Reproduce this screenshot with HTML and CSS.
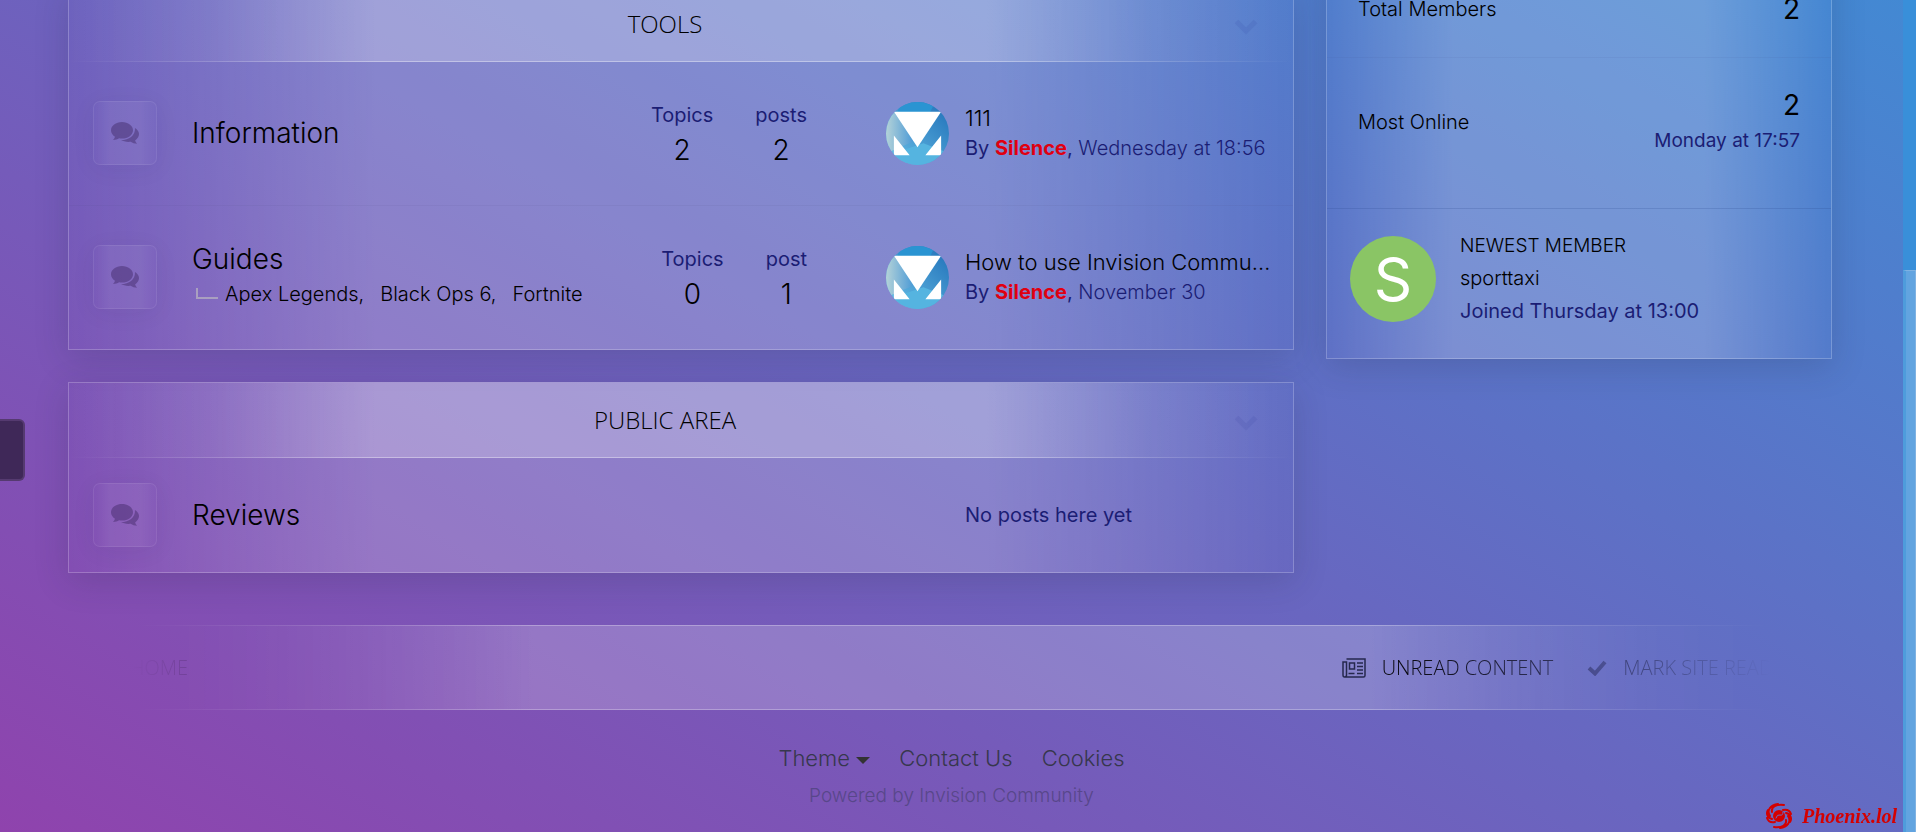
FILE: index.html
```html
<!DOCTYPE html>
<html lang="en">

<head>
    <meta charset="UTF-8">
    <meta name="viewport" content="width=device-width, initial-scale=1.0">
    <title>Forums</title>
    <link rel="stylesheet" href="styles.css">
</head>

<body>

    <!-- shared icons -->
    <svg class="sprite" aria-hidden="true">
        <symbol id="comments" viewBox="0 0 28 22">
            <path d="M11 0c6.100 0 11 3.700 11 8.300s-4.900 8.300-11 8.300c-1 0-2-.1-2.900-.3-1.700 1.200-3.700 1.700-6.100 1.700 1-1 1.700-2 2-3.300C1.500 13.200 0 10.900 0 8.300 0 3.700 4.900 0 11 0z" />
            <path d="M24 6c2.400 1.500 4 3.700 4 6.100 0 2.500-1.500 4.800-3.900 6.300.3 1.200 1 2.200 2 3.300-2.600 0-4.700-.7-6.300-1.900-4 .5-7.300-.4-9.800-1.700C17.500 18.200 24.500 14 24 6z" />
        </symbol>
        <symbol id="chevron" viewBox="0 0 26 20">
            <path d="M3.500 4.500 13 14l9.500-9.500" fill="none" stroke="currentColor" stroke-width="5" />
        </symbol>
        <symbol id="avatar" viewBox="0 0 64 64">
            <linearGradient id="sky" x1="0" y1="1" x2="1" y2="0">
                <stop offset="0" stop-color="#6cc3e8" />
                <stop offset="1" stop-color="#1f6fb8" />
            </linearGradient>
            <linearGradient id="haze" x1="0" y1="0" x2="1" y2="0">
                <stop offset="0" stop-color="#b4d2d8" />
                <stop offset="1" stop-color="#4b9ad6" />
            </linearGradient>
            <rect width="64" height="64" fill="url(#sky)" />
            <path d="M0 0h14L8 10l20 30-28 12z" fill="url(#haze)" />
            <path d="M14 0h36L44 12 12 10z" fill="#2a94d2" />
            <path d="M0 54l20-6 18-6 26 10v12H0z" fill="#55b4e0" />
            <path d="M8 10h48L32 46z" fill="#fff" />
            <path d="M8 34l16 20H8zM56 34v20H40z" fill="#fff" />
        </symbol>
    </svg>

    <div class="layout">
        <main class="forums">
            <section class="panel">
                <header class="panel-header">
                    <h2>TOOLS</h2>
                    <button type="button" class="toggle" aria-label="Toggle Tools"><svg><use href="#chevron" /></svg></button>
                </header>
                <div class="forum">
                    <span class="forum-icon"><svg><use href="#comments" /></svg></span>
                    <div class="forum-main">
                        <h3><a href="#">Information</a></h3>
                    </div>
                    <dl class="stats">
                        <div><dt>Topics</dt><dd>2</dd></div>
                        <div><dt>posts</dt><dd>2</dd></div>
                    </dl>
                    <div class="last-post">
                        <svg class="avatar"><use href="#avatar" /></svg>
                        <div class="last-text">
                            <a href="#" class="topic">111</a>
                            <p>By <a href="#" class="author">Silence</a>, <a href="#" class="date">Wednesday at 18:56</a></p>
                        </div>
                    </div>
                </div>
                <div class="forum">
                    <span class="forum-icon"><svg><use href="#comments" /></svg></span>
                    <div class="forum-main">
                        <h3><a href="#">Guides</a></h3>
                        <ul class="subforums">
                            <li><a href="#">Apex Legends</a>,</li>
                            <li><a href="#">Black Ops 6</a>,</li>
                            <li><a href="#">Fortnite</a></li>
                        </ul>
                    </div>
                    <dl class="stats">
                        <div><dt>Topics</dt><dd>0</dd></div>
                        <div><dt>post</dt><dd>1</dd></div>
                    </dl>
                    <div class="last-post">
                        <svg class="avatar"><use href="#avatar" /></svg>
                        <div class="last-text">
                            <a href="#" class="topic">How to use Invision Community</a>
                            <p>By <a href="#" class="author">Silence</a>, <a href="#" class="date">November 30</a></p>
                        </div>
                    </div>
                </div>
            </section>

            <section class="panel compact">
                <header class="panel-header">
                    <h2>PUBLIC AREA</h2>
                    <button type="button" class="toggle" aria-label="Toggle Public Area"><svg><use href="#chevron" /></svg></button>
                </header>
                <div class="forum">
                    <span class="forum-icon"><svg><use href="#comments" /></svg></span>
                    <div class="forum-main">
                        <h3><a href="#">Reviews</a></h3>
                    </div>
                    <div class="last-post">
                        <p class="empty">No posts here yet</p>
                    </div>
                </div>
            </section>
        </main>

        <aside class="panel sidebar">
            <ul class="member-stats">
                <li><span>Total Members</span><strong>2</strong></li>
                <li><span>Most Online</span><div><strong>2</strong><small>Monday at 17:57</small></div></li>
            </ul>
            <div class="newest">
                <span class="letter">S</span>
                <div>
                    <h4>NEWEST MEMBER</h4>
                    <a href="#">sporttaxi</a>
                    <p>Joined Thursday at 13:00</p>
                </div>
            </div>
        </aside>
    </div>

    <nav class="bottom-bar">
        <a href="#" class="home">HOME</a>
        <a href="#">
            <svg width="24" height="20" viewBox="0 0 24 20" fill="none" stroke="currentColor" stroke-width="1.500">
                <path d="M4.500 1h18.500v16.500q0 1.500-1.500 1.500H2.500q-1.500 0-1.500-2V4h3.500v13q0 2-2 2" />
                <path d="M7.500 5h5v6h-5zM15 5h6M15 8.500h6M15 12h6M6.500 15.500h6M15 15.500h6" />
            </svg>
            UNREAD CONTENT
        </a>
        <a href="#">
            <svg width="20" height="16" viewBox="0 0 20 16" fill="none" stroke="currentColor" stroke-width="4">
                <path d="M2 8l6 5.500L18 2" />
            </svg>
            MARK SITE READ
        </a>
    </nav>

    <footer>
        <ul class="footer-links">
            <li><button type="button">Theme <i class="caret"></i></button></li>
            <li><a href="#">Contact Us</a></li>
            <li><a href="#">Cookies</a></li>
        </ul>
        <p class="powered"><a href="#">Powered by Invision Community</a></p>
    </footer>

    <button type="button" class="side-tab" aria-label="Open panel"></button>

    <a href="#" class="brand">
        <svg width="26" height="26" viewBox="0 0 26 26" fill="none" stroke="currentColor" stroke-width="2" stroke-linecap="round">
            <circle cx="13" cy="13" r="5" fill="currentColor" />
            <path d="M6 9C5 4 10 1 18 2M4 13C0 7 5 2 12 1M6 16C1 15 0 10 2 7M9 19C4 20 2 18 1 15" />
            <path d="M20 17c1 5-4 8-12 7M22 13c4 6-1 11-8 12M20 10c5 1 6 6 4 9M17 7c5-1 7 1 8 4" />
            <path d="M10 15q1-4 4-3t3-3" stroke="#6a6cc4" stroke-width="1" />
        </svg>
        Phoenix.lol
    </a>

    <div class="scroll-track"><div class="scroll-thumb"></div></div>

</body>

</html>
```
FILE: styles.css
```css
* {
    box-sizing: border-box;
}

html {
    height: 100%;
}

body {
    margin: 0;
    padding-right: 13px;
    min-height: 100%;
    overflow: hidden;
    font-family: Inter, "Liberation Sans", sans-serif;
    font-size: 20px;
    line-height: 30px;
    font-weight: 300;
    color: #1b1d74;
    background: linear-gradient(30deg, #8f43ad, #4389d3) fixed;
}

h2, h3, h4, p, ul, dl, dd {
    margin: 0;
    padding: 0;
    font-weight: 300;
}

ul {
    list-style: none;
}

a {
    color: #000;
    text-decoration: none;
}

button {
    padding: 0;
    border: 0;
    background: none;
    font: inherit;
    color: inherit;
}

.sprite {
    position: absolute;
    width: 0;
    height: 0;
}

/* The page is scrolled down, so the columns start above the window */
.layout {
    display: grid;
    grid-template-columns: minmax(0, 1226fr) minmax(0, 506fr);
    gap: 32px;
    align-items: start;
    margin-top: -14px;
    padding: 0 71px 0 68px;
}

.forums {
    display: grid;
    gap: 32px;
}

.panel {
    border: 1px solid rgba(255, 255, 255, 0.22);
    background: linear-gradient(90deg, transparent, rgba(255, 255, 255, 0.2) 25%, rgba(255, 255, 255, 0.2) 75%, transparent);
    box-shadow: 0 8px 32px rgba(31, 38, 60, 0.18);
}

.panel-header {
    display: flex;
    align-items: center;
    height: 75px;
    padding: 0 34px 0 28px;
    border-bottom: 1px solid;
    border-image: linear-gradient(90deg, transparent, rgba(255, 255, 255, 0.35) 25%, rgba(255, 255, 255, 0.35) 75%, transparent) 1;
    background: linear-gradient(90deg, transparent, rgba(255, 255, 255, 0.06) 12%, rgba(255, 255, 255, 0.22) 25%, rgba(255, 255, 255, 0.22) 75%, rgba(255, 255, 255, 0.06) 88%, transparent);
}

.panel-header h2 {
    flex: 1;
    text-align: center;
    font-family: "Open Sans", sans-serif;
    font-size: 24px;
    color: #000;
}

.toggle {
    padding-top: 6px;
    color: rgba(40, 50, 150, 0.1);
}

.toggle svg {
    display: block;
    width: 26px;
    height: 20px;
}

.forum {
    display: flex;
    align-items: center;
    padding: 36px 20px 37px 24px;
}

.forum + .forum {
    border-top: 1px solid rgba(80, 80, 130, 0.08);
}

.compact .forum {
    padding-top: 25px;
    padding-bottom: 25px;
}

.forum-icon {
    display: flex;
    align-items: center;
    justify-content: center;
    width: 64px;
    height: 64px;
    border: 1px solid rgba(255, 255, 255, 0.08);
    border-radius: 7px;
    background: linear-gradient(90deg, transparent, rgba(255, 255, 255, 0.06) 25%, rgba(255, 255, 255, 0.06) 75%, transparent);
    box-shadow: 0 4px 24px rgba(31, 38, 60, 0.06);
}

.forum-icon svg {
    width: 28px;
    height: 22px;
    fill: rgba(62, 38, 100, 0.45);
}

.forum-main {
    flex: 1;
    padding-left: 35px;
}

.forum-main h3 {
    font-size: 28px;
    line-height: 35px;
}

.subforums {
    display: flex;
    gap: 16px;
    line-height: 35px;
    color: #000;
}

.subforums::before {
    content: "";
    width: 20px;
    height: 9px;
    margin: 11px -9px 0 4px;
    border: solid #a99fc0;
    border-width: 0 0 2px 2px;
}

.stats {
    display: flex;
    gap: 42px;
    margin-right: 79px;
    text-align: center;
    font-weight: 400;
    line-height: 35px;
}

.stats dd {
    font-size: 28px;
    color: #000;
}

.last-post {
    display: flex;
    align-items: center;
    gap: 16px;
    width: 387px;
}

.avatar {
    flex: none;
    width: 63px;
    height: 63px;
    border-radius: 50%;
}

.last-text {
    min-width: 0;
    white-space: nowrap;
}

.last-text .topic {
    display: block;
    overflow: hidden;
    text-overflow: ellipsis;
    font-size: 22px;
}

.last-text p {
    font-weight: 400;
}

.last-text .author {
    font-weight: 700;
    color: #e00010;
}

.last-text .date {
    font-weight: 300;
    color: #1b1d74;
}

.empty {
    padding-left: 79px;
    font-weight: 400;
}

/* Sidebar */
.sidebar {
    margin-top: -25px;
}

.member-stats {
    padding-bottom: 22px;
}

.member-stats li {
    display: flex;
    justify-content: space-between;
    padding: 30px 31px;
    line-height: 35px;
    color: #000;
}

.member-stats li + li {
    align-items: center;
    border-top: 1px solid rgba(60, 80, 140, 0.08);
}

.member-stats div {
    text-align: right;
}

.member-stats strong {
    font-size: 28px;
    font-weight: 400;
}

.member-stats small {
    display: block;
    font-size: 19px;
    line-height: 30px;
    font-weight: 400;
    color: #1b1d74;
}

.newest {
    display: flex;
    align-items: center;
    gap: 24px;
    padding: 20px 23px 30px;
    border-top: 1px solid rgba(40, 70, 140, 0.2);
    line-height: 33px;
}

.letter {
    width: 86px;
    border-radius: 50%;
    background: #8ac565;
    font-size: 60px;
    line-height: 86px;
    font-weight: 400;
    text-align: center;
    color: #fff;
}

.newest h4 {
    font-size: 19px;
    color: #000;
}

.newest p {
    font-weight: 400;
}

/* Bottom bar fades out at both ends */
.bottom-bar {
    display: flex;
    align-items: center;
    gap: 34px;
    height: 85px;
    margin-top: 52px;
    padding: 0 130px;
    border: solid rgba(255, 255, 255, 0.28);
    border-width: 1px 0;
    background: linear-gradient(90deg, transparent, rgba(255, 255, 255, 0.2) 28%, rgba(255, 255, 255, 0.2) 72%, transparent);
    mask-image: linear-gradient(90deg, transparent 7%, #000 28%, #000 72%, transparent 93%);
    font-family: "Open Sans", sans-serif;
}

.bottom-bar a {
    display: flex;
    align-items: center;
    gap: 16px;
}

.bottom-bar svg {
    color: #26284d;
}

.bottom-bar .home {
    margin-right: auto;
}

footer {
    padding: 32px 0;
    text-align: center;
}

.footer-links {
    display: flex;
    justify-content: center;
    gap: 29px;
    font-size: 22px;
    line-height: 32px;
}

.footer-links a,
.footer-links button {
    color: #37374d;
}

.caret {
    display: inline-block;
    vertical-align: middle;
    border: 7px solid transparent;
    border-top-color: #333;
    border-bottom: 0;
}

.powered {
    margin-top: 7px;
    font-size: 19px;
}

.powered a {
    color: #58478a;
}

/* Fixed pieces over the page */
.side-tab {
    position: fixed;
    top: 419px;
    left: 0;
    width: 25px;
    height: 62px;
    border: 2px solid #553a70;
    border-left: 0;
    border-radius: 0 6px 6px 0;
    background: #3f2858;
}

.brand {
    position: fixed;
    right: 19px;
    bottom: 1px;
    display: flex;
    align-items: center;
    gap: 10px;
    font-family: "Liberation Serif", serif;
    font-style: italic;
    font-weight: 700;
    color: #d40000;
}

.scroll-track {
    position: fixed;
    top: 0;
    right: 0;
    bottom: 0;
    width: 13px;
    background: #398fd9;
}

.scroll-thumb {
    height: 100%;
    margin-top: 270px;
    border: 1px solid #7fb2e2;
    border-left: 3px solid #4e9cdc;
    background: #62a4e0;
}
```
